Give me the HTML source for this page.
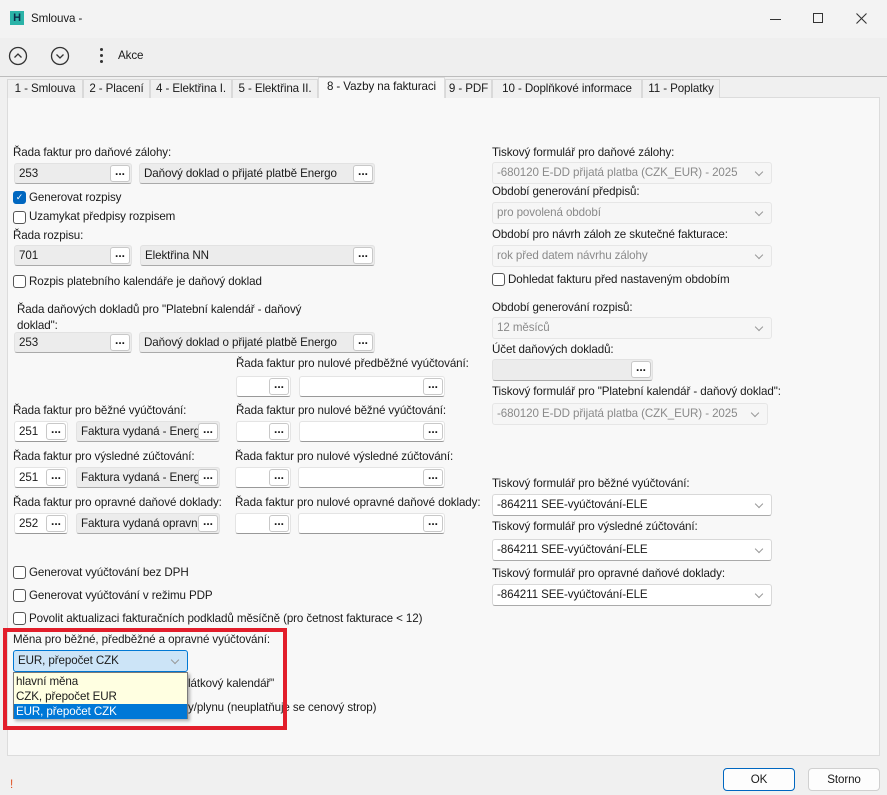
<!DOCTYPE html>
<html><head><meta charset="utf-8"><style>
*{box-sizing:border-box;margin:0;padding:0}
body{width:887px;height:795px;background:#f0f0f0;font-family:"Liberation Sans",sans-serif;font-size:11.6px;letter-spacing:-0.1px;color:#1a1a1a;position:relative;overflow:hidden}
.a{position:absolute;white-space:nowrap}
.t{position:absolute;white-space:nowrap;line-height:16px;height:16px}
.f{position:absolute;height:21px;background:#ececec;border:1px solid #e2e2e2;border-bottom:1px solid #aaa;border-radius:3px;line-height:19px;padding-left:4px;overflow:hidden}
.fw{background:#fff;border:1px solid #e4e4e4;border-bottom:1px solid #999}
.b{position:absolute;top:1px;right:1px;width:20px;height:17px;background:#fff;border:1px solid #c8c8c8;border-radius:3px;text-align:center;line-height:11px;font-weight:bold;font-size:12px;letter-spacing:0px}
.c{position:absolute;height:22px;border:1px solid #e6e6e6;border-radius:3px;background:#f6f6f6;color:#8a8a8a;line-height:20px;padding-left:4px;overflow:hidden}
.cw{background:#fff;color:#1a1a1a;border:1px solid #d8d8d8;border-bottom:1px solid #aaa}
.c:after{content:"";position:absolute;right:9px;top:6px;width:5px;height:5px;border-right:1px solid #999;border-bottom:1px solid #999;transform:rotate(45deg)}
.k{position:absolute;width:13px;height:13px;border:1px solid #555;border-radius:3px;background:#fff}
.tab{position:absolute;top:79px;height:19px;border:1px solid #d9d9d9;border-bottom:none;background:#f0f0f0;line-height:17px;text-align:center;overflow:hidden}
</style></head><body>
<div class="a" style="left:0;top:0;width:887px;height:38px;background:#f3f3f3"></div>
<div class="a" style="left:10px;top:11px;width:14px;height:14px;background:#2bb3a8;color:#0b2d4a;font-weight:bold;font-size:11px;text-align:center;line-height:14px">H</div>
<div class="t" style="left:31px;top:11px">Smlouva -</div>
<div class="a" style="left:770px;top:19px;width:11px;height:1px;background:#333"></div>
<div class="a" style="left:813px;top:13px;width:10px;height:10px;border:1px solid #333"></div>
<svg class="a" style="left:856px;top:13px" width="11" height="11"><path d="M0.5 0.5 10.5 10.5M10.5 0.5 0.5 10.5" stroke="#333" stroke-width="1.1"/></svg>
<div class="a" style="left:0;top:38px;width:887px;height:39px;background:#efefef;border-bottom:1px solid #bdbdbd"></div>
<svg class="a" style="left:8px;top:46px" width="70" height="20"><circle cx="10" cy="10" r="8.5" fill="none" stroke="#333" stroke-width="1.3"/><path d="M6.5 11.5 10 8 13.5 11.5" fill="none" stroke="#333" stroke-width="1.3"/><circle cx="52" cy="10" r="8.5" fill="none" stroke="#333" stroke-width="1.3"/><path d="M48.5 8.5 52 12 55.5 8.5" fill="none" stroke="#333" stroke-width="1.3"/></svg>
<div class="a" style="left:100px;top:48px;width:3px;height:3px;background:#333;border-radius:2px"></div>
<div class="a" style="left:100px;top:54px;width:3px;height:3px;background:#333;border-radius:2px"></div>
<div class="a" style="left:100px;top:60px;width:3px;height:3px;background:#333;border-radius:2px"></div>
<div class="t" style="left:118px;top:48px">Akce</div>
<div class="a" style="left:7px;top:97px;width:873px;height:659px;background:#f8f8f8;border:1px solid #dcdcdc"></div>
<div class="tab" style="left:7px;width:76px">1 - Smlouva</div>
<div class="tab" style="left:83px;width:67px">2 - Placení</div>
<div class="tab" style="left:150px;width:82px">4 - Elektřina I.</div>
<div class="tab" style="left:232px;width:86px">5 - Elektřina II.</div>
<div class="tab" style="left:318px;width:127px;top:77px;height:21px;background:#f8f8f8;border-color:#dcdcdc">8 - Vazby na fakturaci</div>
<div class="tab" style="left:445px;width:47px">9 - PDF</div>
<div class="tab" style="left:492px;width:150px">10 - Doplňkové informace</div>
<div class="tab" style="left:642px;width:78px">11 - Poplatky</div>

<div class="t" style="left:13px;top:145px">Řada faktur pro daňové zálohy:</div>
<div class="f" style="left:14px;top:163px;width:118px">253<div class="b">...</div></div>
<div class="f" style="left:139px;top:163px;width:236px">Daňový doklad o přijaté platbě Energo<div class="b">...</div></div>
<div class="k" style="left:13px;top:191px;background:#0067c0;border-color:#0067c0;color:#fff;font-size:9px;line-height:11px;text-align:center">✓</div>
<div class="t" style="left:29px;top:190px">Generovat rozpisy</div>
<div class="k" style="left:13px;top:211px"></div>
<div class="t" style="left:29px;top:209px">Uzamykat předpisy rozpisem</div>
<div class="t" style="left:13px;top:228px">Řada rozpisu:</div>
<div class="f" style="left:14px;top:245px;width:118px">701<div class="b">...</div></div>
<div class="f" style="left:140px;top:245px;width:235px">Elektřina NN<div class="b">...</div></div>
<div class="k" style="left:13px;top:275px"></div>
<div class="t" style="left:29px;top:274px">Rozpis platebního kalendáře je daňový doklad</div>
<div class="t" style="left:17px;top:302px">Řada daňových dokladů pro "Platební kalendář - daňový</div>
<div class="t" style="left:17px;top:318px">doklad":</div>
<div class="f" style="left:14px;top:332px;width:118px">253<div class="b">...</div></div>
<div class="f" style="left:139px;top:332px;width:236px">Daňový doklad o přijaté platbě Energo<div class="b">...</div></div>

<div class="t" style="left:236px;top:356px">Řada faktur pro nulové předběžné vyúčtování:</div>
<div class="f fw" style="left:236px;top:376px;width:55px"><div class="b">...</div></div>
<div class="f fw" style="left:299px;top:376px;width:146px"><div class="b">...</div></div>

<div class="t" style="left:13px;top:403px">Řada faktur pro běžné vyúčtování:</div>
<div class="t" style="left:236px;top:403px">Řada faktur pro nulové běžné vyúčtování:</div>
<div class="f fw" style="left:14px;top:421px;width:54px">251<div class="b">...</div></div>
<div class="f" style="left:76px;top:421px;width:144px">Faktura vydaná - Energ<div class="b">...</div></div>
<div class="f fw" style="left:236px;top:421px;width:55px"><div class="b">...</div></div>
<div class="f fw" style="left:299px;top:421px;width:146px"><div class="b">...</div></div>

<div class="t" style="left:13px;top:449px">Řada faktur pro výsledné zúčtování:</div>
<div class="t" style="left:235px;top:449px">Řada faktur pro nulové výsledné zúčtování:</div>
<div class="f fw" style="left:14px;top:467px;width:54px">251<div class="b">...</div></div>
<div class="f" style="left:76px;top:467px;width:144px">Faktura vydaná - Energ<div class="b">...</div></div>
<div class="f fw" style="left:235px;top:467px;width:56px"><div class="b">...</div></div>
<div class="f fw" style="left:298px;top:467px;width:147px"><div class="b">...</div></div>

<div class="t" style="left:13px;top:495px">Řada faktur pro opravné daňové doklady:</div>
<div class="t" style="left:235px;top:495px;width:256px;overflow:hidden">Řada faktur pro nulové opravné daňové doklady:</div>
<div class="f fw" style="left:14px;top:513px;width:54px">252<div class="b">...</div></div>
<div class="f" style="left:76px;top:513px;width:144px">Faktura vydaná opravn<div class="b">...</div></div>
<div class="f fw" style="left:235px;top:513px;width:56px"><div class="b">...</div></div>
<div class="f fw" style="left:298px;top:513px;width:147px"><div class="b">...</div></div>

<div class="k" style="left:13px;top:566px"></div>
<div class="t" style="left:29px;top:565px">Generovat vyúčtování bez DPH</div>
<div class="k" style="left:13px;top:589px"></div>
<div class="t" style="left:29px;top:588px">Generovat vyúčtování v režimu PDP</div>
<div class="k" style="left:13px;top:612px"></div>
<div class="t" style="left:29px;top:611px">Povolit aktualizaci fakturačních podkladů měsíčně (pro četnost fakturace &lt; 12)</div>

<div class="t" style="left:188px;top:676px">látkový kalendář"</div>
<div class="t" style="left:188px;top:700px">y/plynu (neuplatňuje se cenový strop)</div>

<div class="t" style="left:13px;top:632px">Měna pro běžné, předběžné a opravné vyúčtování:</div>
<div class="c" style="left:13px;top:650px;width:175px;height:22px;background:#cce4f7;border-color:#0078d4;color:#1a1a1a">EUR, přepočet CZK</div>
<div class="a" style="left:13px;top:672px;width:175px;height:47px;background:#ffffe1;border:1px solid #7a7a7a;box-shadow:2px 2px 3px rgba(0,0,0,.3)">
<div class="t" style="left:2px;top:1px">hlavní měna</div>
<div class="t" style="left:2px;top:16px">CZK, přepočet EUR</div>
<div class="t" style="left:0;top:31px;width:173px;height:15px;background:#0078d7;color:#fff;padding-left:2px;line-height:15px">EUR, přepočet CZK</div>
</div>
<div class="a" style="left:3px;top:628px;width:284px;height:102px;border:4px solid #e21e2b"></div>

<div class="t" style="left:492px;top:145px">Tiskový formulář pro daňové zálohy:</div>
<div class="c" style="left:492px;top:162px;width:280px">-680120 E-DD přijatá platba  (CZK_EUR) - 2025</div>
<div class="t" style="left:492px;top:184px">Období generování předpisů:</div>
<div class="c" style="left:492px;top:202px;width:280px">pro povolená období</div>
<div class="t" style="left:492px;top:227px">Období pro návrh záloh ze skutečné fakturace:</div>
<div class="c" style="left:492px;top:245px;width:280px">rok před datem návrhu zálohy</div>
<div class="k" style="left:492px;top:273px"></div>
<div class="t" style="left:508px;top:272px">Dohledat fakturu před nastaveným obdobím</div>
<div class="t" style="left:492px;top:300px">Období generování rozpisů:</div>
<div class="c" style="left:492px;top:317px;width:280px">12 měsíců</div>
<div class="t" style="left:492px;top:342px">Účet daňových dokladů:</div>
<div class="f" style="left:492px;top:359px;width:161px;height:22px"><div class="b">...</div></div>
<div class="t" style="left:492px;top:384px">Tiskový formulář pro "Platební kalendář - daňový doklad":</div>
<div class="c" style="left:492px;top:403px;width:276px">-680120 E-DD přijatá platba  (CZK_EUR) - 2025</div>
<div class="t" style="left:492px;top:476px">Tiskový formulář pro běžné vyúčtování:</div>
<div class="c cw" style="left:492px;top:494px;width:280px">-864211 SEE-vyúčtování-ELE</div>
<div class="t" style="left:492px;top:519px">Tiskový formulář pro výsledné zúčtování:</div>
<div class="c cw" style="left:492px;top:539px;width:280px">-864211 SEE-vyúčtování-ELE</div>
<div class="t" style="left:492px;top:566px">Tiskový formulář pro opravné daňové doklady:</div>
<div class="c cw" style="left:492px;top:584px;width:280px">-864211 SEE-vyúčtování-ELE</div>

<div class="a" style="left:723px;top:768px;width:72px;height:23px;background:#fdfdfd;border:1px solid #0067c0;border-radius:4px;text-align:center;line-height:21px">OK</div>
<div class="a" style="left:808px;top:768px;width:72px;height:23px;background:#fdfdfd;border:1px solid #d0d0d0;border-radius:4px;text-align:center;line-height:21px">Storno</div>
<div class="t" style="left:10px;top:777px;color:#e05020">!</div>
</body></html>
